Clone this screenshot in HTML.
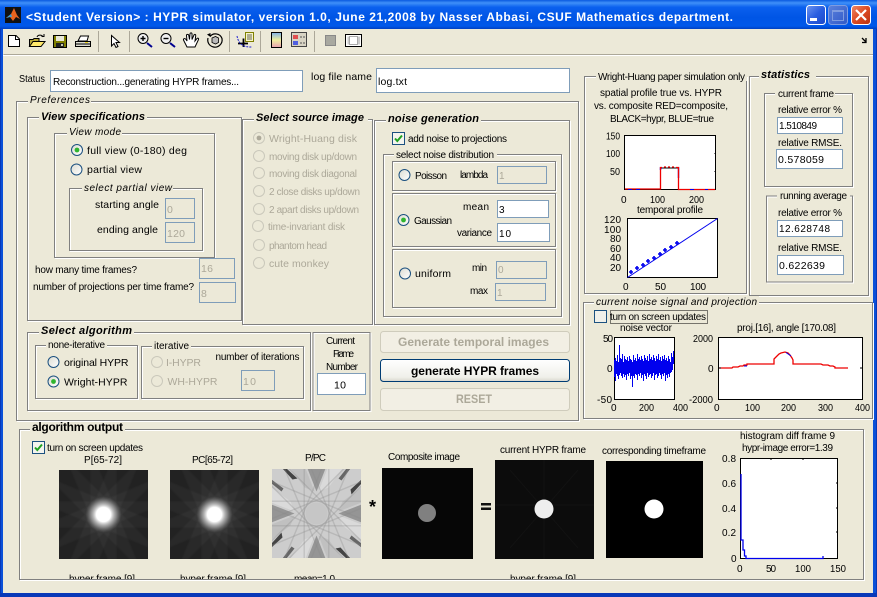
<!DOCTYPE html>
<html><head><meta charset="utf-8"><title>HYPR simulator</title>
<style>
html,body{margin:0;padding:0;background:#ece9d8;width:877px;height:597px;overflow:hidden}
svg{display:block}
text{font-family:"Liberation Sans",sans-serif;font-size:10px;fill:#000;white-space:pre}
.d{fill:#aca899}
.bi{font-weight:bold;font-style:italic;font-size:11px}
.i{font-style:italic;font-size:10px}
.b{font-weight:bold;font-size:12px}
.n{font-size:10.5px}
.g{fill:none;stroke:#808080}
.w{fill:none;stroke:#fff}
.bg{fill:#ece9d8}
.in{fill:#fff;stroke:#7f9db9}
.dis{fill:#ece9d8;stroke:#7f9db9}
.ax{fill:#fff;stroke:#000}
.sep{stroke:#aca899}
</style></head><body>
<svg xmlns="http://www.w3.org/2000/svg" width="877" height="597" viewBox="0 0 877 597">
<defs>
<linearGradient id="tb" x1="0" y1="0" x2="0" y2="1">
<stop offset="0" stop-color="#0a5ae0"/><stop offset=".1" stop-color="#3f90f8"/><stop offset=".25" stop-color="#0a60ee"/><stop offset=".6" stop-color="#0055e5"/><stop offset=".9" stop-color="#0058ea"/><stop offset="1" stop-color="#0040c0"/>
</linearGradient>
<linearGradient id="btnb" x1="0" y1="0" x2="1" y2="1"><stop offset="0" stop-color="#6f97f0"/><stop offset=".5" stop-color="#2a5ee0"/><stop offset="1" stop-color="#1c48c8"/></linearGradient>
<linearGradient id="btnf" x1="0" y1="0" x2="1" y2="1"><stop offset="0" stop-color="#5c82dc"/><stop offset="1" stop-color="#2f58c8"/></linearGradient>
<linearGradient id="btnr" x1="0" y1="0" x2="1" y2="1"><stop offset="0" stop-color="#ee8a6a"/><stop offset=".5" stop-color="#dd4a22"/><stop offset="1" stop-color="#b83010"/></linearGradient>
<linearGradient id="rf" x1="0" y1="0" x2="1" y2="1"><stop offset="0" stop-color="#dcdcd2"/><stop offset="1" stop-color="#fff"/></linearGradient>
<linearGradient id="bf" x1="0" y1="0" x2="0" y2="1"><stop offset="0" stop-color="#fff"/><stop offset=".8" stop-color="#f0f0ea"/><stop offset="1" stop-color="#d8d6cc"/></linearGradient>
<linearGradient id="cb" x1="0" y1="0" x2="0" y2="1"><stop offset="0" stop-color="#7fb0e8"/><stop offset=".5" stop-color="#f0f0a0"/><stop offset="1" stop-color="#e8a0b0"/></linearGradient>
<radialGradient id="glow"><stop offset="0" stop-color="#fff"/><stop offset=".4" stop-color="#fff"/><stop offset=".65" stop-color="#bbb" stop-opacity=".7"/><stop offset="1" stop-color="#888" stop-opacity="0"/></radialGradient>
<filter id="sf" x="-5%" y="-5%" width="110%" height="110%"><feGaussianBlur stdDeviation=".7"/></filter>
<g id="r"><circle r="5.5" fill="url(#rf)" stroke="#1c5180"/></g>
<g id="rc"><circle r="5.5" fill="url(#rf)" stroke="#1c5180"/><circle r="2.4" fill="#2fb52f"/></g>
<g id="rd"><circle r="5.5" fill="#ece9d8" stroke="#cac8bb"/></g>
<g id="rdc"><circle r="5.5" fill="#ece9d8" stroke="#cac8bb"/><circle r="2.4" fill="#aca899"/></g>
<g id="ck"><rect x=".5" y=".5" width="12" height="12" fill="#f4f4ee" stroke="#1c5180"/><path d="M3 6.5 5.3 9 10 3.5" fill="none" stroke="#21a121" stroke-width="2"/></g>
<g id="st" fill="#fff"><rect x="-70" y="-13" width="140" height="26" opacity=".035"/></g>
<g id="strips"><use href="#st"/><use href="#st" transform="rotate(22.5)"/><use href="#st" transform="rotate(45)"/><use href="#st" transform="rotate(67.5)"/><use href="#st" transform="rotate(90)"/><use href="#st" transform="rotate(112.5)"/><use href="#st" transform="rotate(135)"/><use href="#st" transform="rotate(157.5)"/></g>
<g id="pst"><rect x="-70" y="-13" width="140" height="1.4" fill="#888" opacity=".3"/><rect x="-70" y="11.6" width="140" height="1.4" fill="#888" opacity=".3"/></g>
<g id="pstrips"><use href="#pst"/><use href="#pst" transform="rotate(22.5)"/><use href="#pst" transform="rotate(45)"/><use href="#pst" transform="rotate(67.5)"/><use href="#pst" transform="rotate(90)"/><use href="#pst" transform="rotate(112.5)"/><use href="#pst" transform="rotate(135)"/><use href="#pst" transform="rotate(157.5)"/></g>
<g id="pq"><path d="M-9-45H9L0-22Z" fill="#959595"/><path d="M-34-45H-30L-19-35-24-34Z" fill="#444"/><path d="M34-45H30L22-35 25-33Z" fill="#666"/><path d="M-26-45H-11L-2-22-12-26Z" fill="#c0c0c0"/><path d="M26-45H11L2-22 12-26Z" fill="#dadada"/></g>
<clipPath id="cl"><rect x="20" y="430" width="843" height="149"/></clipPath>
</defs>

<!-- window frame -->
<rect width="877" height="597" fill="#0a50d8"/>
<rect x="0" y="0" width="877" height="29" fill="url(#tb)"/>
<rect x="3" y="29" width="870" height="564" fill="#ece9d8"/>
<rect y="593" width="877" height="4" fill="#0838b8"/>
<rect x="0" y="29" width="1" height="564" fill="#0838b8"/>
<rect x="876" y="29" width="1" height="564" fill="#0838b8"/>

<!-- title bar -->
<rect x="5" y="7" width="16" height="16" fill="#111"/>
<path d="M6 18 11 14 14 8 17 15 20 19 16 17 13 21 10 17Z" fill="#e8641e"/>
<path d="M6 18 11 14 12 17 10 17Z" fill="#3aa0d8"/>
<text x="26" y="21" textLength="707" style="font-weight:bold;font-size:12px;fill:#fff">&lt;Student Version&gt; : HYPR simulator, version 1.0, June 21,2008 by Nasser Abbasi, CSUF Mathematics department.</text>
<rect x="806.5" y="5.5" width="19" height="19" rx="3" fill="url(#btnb)" stroke="#fff"/>
<rect x="810" y="18" width="7" height="3" fill="#fff"/>
<rect x="828.5" y="5.5" width="19" height="19" rx="3" fill="url(#btnf)" stroke="#7f9ce0"/>
<rect x="832.5" y="10.5" width="11" height="10" fill="none" stroke="#7f9ce0"/><rect x="832" y="10" width="12" height="2" fill="#7f9ce0"/>
<rect x="851.5" y="5.5" width="19" height="19" rx="3" fill="url(#btnr)" stroke="#fff"/>
<path d="M856 10 866 20M866 10 856 20" stroke="#fff" stroke-width="2.2"/>

<!-- toolbar -->
<path d="M3.5 54.5H873" stroke="#aca899"/><path d="M3 55.5H873" stroke="#fff"/>
<path class="sep" d="M98.5 31V52M129.5 31V52M229.5 31V52M260.5 31V52M314.5 31V52"/>
<path d="M8.5 35.5H16L19.5 39V46.5H8.5Z" fill="#fff" stroke="#000"/><path d="M15.5 36V39.5H19" fill="none" stroke="#000"/>
<path d="M29.5 46.5V39.5H33L34 38.5H39V41" fill="#b8a838" stroke="#000"/><path d="M29.5 46.5 33 41.5H45L41 46.5Z" fill="#ffe96b" stroke="#000"/><path d="M37 37C38 34.5 42 34.5 43 37M41.5 36.5H44V34" fill="none" stroke="#000"/>
<rect x="53.5" y="35.5" width="13" height="12" fill="#808000" stroke="#000"/><rect x="56" y="36" width="8" height="5" fill="#e8e8d8"/><rect x="56" y="43" width="8" height="4" fill="#222"/><rect x="61" y="44" width="2" height="2" fill="#c8c8a8"/>
<path d="M78 41 80.5 36H88.5L87 41Z" fill="#fff" stroke="#000"/><path d="M75.5 41.5H90.5V46.5H75.5Z" fill="#dcdcd0" stroke="#000"/><path d="M76 44H90" stroke="#000"/><rect x="85" y="42" width="3" height="1" fill="#e8d020"/>
<path d="M111.5 35.5V46L114 43.5 116 47.5 118 46.5 116 42.5H119.5Z" fill="#fff" stroke="#000"/>
<circle cx="143" cy="38.5" r="5" fill="#f0f0f0" stroke="#000"/><path d="M140.5 38.5H145.5M143 36V41" stroke="#000" stroke-width="1.4"/><path d="M147 43 152 47" stroke="#000090" stroke-width="2"/>
<circle cx="166" cy="38.5" r="5" fill="#f0f0f0" stroke="#000"/><path d="M163.5 38.5H168.5" stroke="#000" stroke-width="1.4"/><path d="M170 43 175 47" stroke="#000090" stroke-width="2"/>
<path d="M187 47 183.5 40C183 38.5 185 38 186 39.5L187 41 186.5 35.5C186.5 34 188.5 34 188.8 35.5L189.5 39.5 190 33.8C190.2 32.5 192 32.6 192 34L192 39.5 194 35C194.6 33.8 196 34.5 195.7 36L195 41 197 38.5C198 37.6 199 38.5 198.5 39.6L195 47Z" fill="#fff" stroke="#000"/>
<path d="M210 36.5C213 32.5 220 33 222 38.5 223 44 218 48 213.5 47 209 46 207 42 208 38" fill="none" stroke="#000" stroke-width="1.2"/><path d="M207 34.5 210.5 37 210.5 33Z" fill="#000"/><path d="M212 38 215.5 36.5 218.5 38V42.5L215.5 44 212 42.5Z" fill="#bbb" stroke="#000" stroke-width=".8"/>
<rect x="245.5" y="32.5" width="8" height="9" fill="#f8f4c8" stroke="#808000"/><path d="M247 35H252M247 37H252M247 39H252" stroke="#333" stroke-width=".8"/>
<path d="M243.5 38.5V47M238 43.5H248" stroke="#000" stroke-width="1.8" fill="none"/><path d="M237 36C238 41 240 44 244 46 247 47 250 47 252 47" fill="none" stroke="#2020d0" stroke-dasharray="2 1"/>
<rect x="271.5" y="32.5" width="10" height="15" fill="url(#cb)" stroke="#000"/>
<rect x="291.5" y="32.5" width="15" height="14" fill="#d8d4c4" stroke="#444"/><rect x="293" y="35" width="5" height="4" fill="#e05050"/><rect x="293" y="41" width="5" height="4" fill="#5060e0"/><path d="M300 37H305M300 43H305" stroke="#555" stroke-dasharray="2 1"/>
<rect x="325.5" y="35.5" width="10" height="10" fill="#a8a8a0" stroke="#888"/>
<rect x="345.5" y="34.5" width="16" height="12" fill="#fff" stroke="#000"/><rect x="347.5" y="36.5" width="2" height="8" fill="#ccc"/><rect x="349.5" y="36.5" width="8" height="8" fill="#fff" stroke="#aaa"/><rect x="358" y="36.5" width="2" height="8" fill="#ccc"/>
<path d="M862 38 866 42M866 38V42.5H862" fill="none" stroke="#000" stroke-width="1.3"/>

<!-- status row -->
<text x="19" y="82" textLength="26" lengthAdjust="spacingAndGlyphs">Status</text>
<rect class="in" x="50.5" y="70.5" width="252" height="21"/>
<text x="53" y="85" textLength="186">Reconstruction...generating HYPR frames...</text>
<text x="311" y="80" textLength="61" class="n">log file name</text>
<rect class="in" x="376.5" y="68.5" width="193" height="24"/>
<text x="378" y="85" textLength="29" class="n">log.txt</text>

<!-- Preferences -->
<rect class="w" x="17.5" y="102.5" width="562" height="319"/><rect class="g" x="16.5" y="101.5" width="562" height="319"/>
<rect class="bg" x="28" y="96" width="63" height="10"/><text x="30" y="103" textLength="60" class="i">Preferences</text>

<!-- View spec -->
<rect class="w" x="28.5" y="118.5" width="214" height="203"/><rect class="g" x="27.5" y="117.5" width="214" height="203"/>
<rect class="bg" x="39" y="112" width="108" height="10"/><text x="41" y="120" textLength="104" class="bi">View specifications</text>
<rect class="w" x="55.5" y="134.5" width="160" height="124"/><rect class="g" x="54.5" y="133.5" width="160" height="124"/>
<rect class="bg" x="67" y="128" width="55" height="10"/><text x="69" y="135" textLength="52" class="i">View mode</text>
<use href="#rc" x="77" y="150"/><text x="87" y="154" textLength="100" class="n">full view (0-180) deg</text>
<use href="#r" x="76.5" y="169.5"/><text x="87" y="173" textLength="55" class="n">partial view</text>
<rect class="w" x="70.5" y="189.5" width="133" height="62"/><rect class="g" x="69.5" y="188.5" width="133" height="62"/>
<rect class="bg" x="82" y="183" width="91" height="10"/><text x="84" y="191" textLength="88" class="i">select partial view</text>
<text x="95" y="208" textLength="64" class="n">starting angle</text>
<rect class="dis" x="165.5" y="198.5" width="29" height="20"/><text x="167" y="213" class="d n">0</text>
<text x="97" y="233" textLength="61" class="n">ending angle</text>
<rect class="dis" x="165.5" y="222.5" width="29" height="20"/><text x="167" y="237" textLength="18" class="d n">120</text>
<text x="35" y="273" textLength="102">how many time frames?</text>
<rect class="dis" x="199.5" y="258.5" width="35" height="20"/><text x="201" y="272" class="d n" textLength="12">16</text>
<text x="33" y="290" textLength="161">number of projections per time frame?</text>
<rect class="dis" x="199.5" y="282.5" width="36" height="20"/><text x="201" y="297" class="d n">8</text>

<!-- source -->
<rect class="w" x="243.5" y="120.5" width="130" height="205"/><rect class="g" x="242.5" y="119.5" width="130" height="205"/>
<rect class="bg" x="254" y="113" width="114" height="10"/><text x="256" y="121" textLength="108" class="bi">Select source image</text>
<use href="#rdc" x="259" y="138"/><text class="d n" x="269" y="142" textLength="88">Wright-Huang disk</text>
<use href="#rd" x="259" y="156"/><text class="d" x="269" y="160" textLength="88">moving disk up/down</text>
<use href="#rd" x="259" y="173"/><text class="d" x="269" y="177" textLength="88">moving disk diagonal</text>
<use href="#rd" x="259" y="191"/><text class="d" x="269" y="195" textLength="91">2 close disks up/down</text>
<use href="#rd" x="259" y="209"/><text class="d" x="269" y="213" textLength="90">2 apart disks up/down</text>
<use href="#rd" x="258" y="226"/><text class="d" x="268" y="230" textLength="77">time-invariant disk</text>
<use href="#rd" x="259" y="245"/><text class="d" x="269" y="249" textLength="58">phantom head</text>
<use href="#rd" x="259" y="263"/><text class="d n" x="269" y="267" textLength="60">cute monkey</text>

<!-- noise generation -->
<rect class="w" x="375.5" y="121.5" width="195" height="204"/><rect class="g" x="374.5" y="120.5" width="195" height="204"/>
<rect class="bg" x="386" y="114" width="95" height="10"/><text x="388" y="122" textLength="91" class="bi">noise generation</text>
<use href="#ck" x="392" y="132"/><text x="408" y="142" textLength="99">add noise to projections</text>
<rect class="w" x="384.5" y="155.5" width="178" height="162"/><rect class="g" x="383.5" y="154.5" width="178" height="162"/>
<rect class="bg" x="394" y="149" width="103" height="10"/><text x="396" y="158" textLength="98">select noise distribution</text>
<rect class="w" x="393.5" y="162.5" width="163" height="29"/><rect class="g" x="392.5" y="161.5" width="163" height="29"/>
<use href="#r" x="404.5" y="175"/><text x="415" y="179" textLength="32">Poisson</text>
<text x="460" y="178" textLength="28">lambda</text>
<rect class="dis" x="497.5" y="166.5" width="49" height="17"/><text x="499" y="179" class="d">1</text>
<rect class="w" x="393.5" y="194.5" width="163" height="53"/><rect class="g" x="392.5" y="193.5" width="163" height="53"/>
<use href="#rc" x="403.5" y="220"/><text x="414" y="224" textLength="38">Gaussian</text>
<text x="463" y="210" textLength="26">mean</text>
<rect class="in" x="497.5" y="200.5" width="51" height="17"/><text x="499" y="213">3</text>
<text x="457" y="236" textLength="35">variance</text>
<rect class="in" x="497.5" y="223.5" width="52" height="18"/><text x="499" y="237" textLength="12">10</text>
<rect class="w" x="393.5" y="250.5" width="163" height="58"/><rect class="g" x="392.5" y="249.5" width="163" height="58"/>
<use href="#r" x="405" y="273.5"/><text x="415" y="277" textLength="36" class="n">uniform</text>
<text x="472" y="271" textLength="15">min</text>
<rect class="dis" x="496.5" y="261.5" width="50" height="17"/><text x="498" y="273" class="d">0</text>
<text x="470" y="294" textLength="18">max</text>
<rect class="dis" x="495.5" y="283.5" width="50" height="17"/><text x="497" y="296" class="d">1</text>

<!-- algorithm -->
<rect class="w" x="28.5" y="333.5" width="283" height="78"/><rect class="g" x="27.5" y="332.5" width="283" height="78"/>
<rect class="bg" x="39" y="326" width="95" height="10"/><text x="41" y="334" textLength="91" class="bi">Select algorithm</text>
<rect class="w" x="36.5" y="346.5" width="102" height="53"/><rect class="g" x="35.5" y="345.5" width="102" height="53"/>
<rect class="bg" x="46" y="340" width="61" height="10"/><text x="48" y="348" textLength="57">none-iterative</text>
<use href="#r" x="53.5" y="362"/><text x="64" y="366" textLength="64.500" class="n">original HYPR</text>
<use href="#rc" x="53.5" y="381.500"/><text x="64" y="385.500" textLength="63.500" class="n">Wright-HYPR</text>
<rect class="w" x="142.500" y="347.500" width="162" height="52"/><rect class="g" x="141.500" y="346.500" width="162" height="52"/>
<rect class="bg" x="152" y="341" width="39" height="10"/><text x="154" y="349" textLength="35">iterative</text>
<use href="#rd" x="157" y="362"/><text class="d n" x="166" y="366" textLength="35">I-HYPR</text>
<use href="#rd" x="157" y="381"/><text class="d n" x="167.500" y="385" textLength="50" lengthAdjust="spacingAndGlyphs">WH-HYPR</text>
<text x="215.500" y="360" textLength="84">number of iterations</text>
<rect class="dis" x="241.500" y="370.500" width="33" height="20"/><text x="243" y="385" class="d n" textLength="13">10</text>
<rect class="w" x="314" y="333.500" width="57" height="78"/><rect class="g" x="313" y="332.500" width="57" height="78"/>
<text x="326" y="344" textLength="29">Current</text>
<text x="333" y="357" textLength="21">Frame</text>
<text x="326" y="370" textLength="32">Number</text>
<rect class="in" x="317.500" y="373.500" width="48" height="21"/>
<text x="334" y="388.500" textLength="12" class="n">10</text>

<!-- buttons -->
<rect x="380.500" y="331.500" width="189" height="21" rx="3" fill="#f2efe4" stroke="#cfccbc"/>
<text x="398" y="346" textLength="151" class="b d">Generate temporal images</text>
<rect x="380.500" y="359.500" width="189" height="22" rx="3" fill="url(#bf)" stroke="#003c74"/>
<text x="411" y="375" textLength="128" class="b">generate HYPR frames</text>
<rect x="380.500" y="388.500" width="189" height="22" rx="3" fill="#f2efe4" stroke="#cfccbc"/>
<text x="456" y="403" textLength="36" class="b d" lengthAdjust="spacingAndGlyphs">RESET</text>

<!-- Wright-Huang -->
<rect class="w" x="585.500" y="77.500" width="162" height="217"/><rect class="g" x="584.500" y="76.500" width="162" height="217"/>
<rect class="bg" x="596" y="71" width="151" height="10"/><text x="598" y="80" textLength="147">Wright-Huang paper simulation only</text>
<text x="600" y="96" textLength="122">spatial profile true vs. HYPR</text>
<text x="594" y="109" textLength="134">vs. composite RED=composite,</text>
<text x="610" y="122" textLength="104">BLACK=hypr, BLUE=true</text>
<rect class="ax" x="624.500" y="135.500" width="91" height="54"/>
<path d="M660.500 189V168H678.500V189" fill="none" stroke="#000"/>
<path d="M660.500 170V168H662M678 168H678.500V178" fill="none" stroke="#0000ee" stroke-width="1.4"/>
<path d="M625 189H660.500V167.500H662M664 167H666M668 167H670M672 167H674M676 167.500H678.500V189.500H715" fill="none" stroke="#ee0000" stroke-width="1.3"/>
<path d="M628 189.500H632M636 189.500H640M690 189.500H694M705 189.500H708" stroke="#0000ee"/>
<path d="M715 153V154M715 171V172" stroke="#000"/>
<text x="606" y="139.500" textLength="14" lengthAdjust="spacingAndGlyphs">150</text><text x="606" y="157" textLength="14" lengthAdjust="spacingAndGlyphs">100</text><text x="610" y="175" textLength="10" lengthAdjust="spacingAndGlyphs">50</text>
<text x="621" y="203">0</text><text x="650" y="203" textLength="15" lengthAdjust="spacingAndGlyphs">100</text><text x="689" y="203" textLength="15" lengthAdjust="spacingAndGlyphs">200</text>
<text x="637" y="213" textLength="66">temporal profile</text>
<rect class="ax" x="627.500" y="218.500" width="90" height="59"/>
<path d="M627.500 277.500 717.500 218.500" stroke="#0000ee"/>
<g stroke="#0000ee" stroke-width="1.6" fill="#0000ee"><path d="M631 270V274M629 272H633"/><path d="M637 266V270M635 268H639"/><path d="M643 263V267M641 265H645"/><path d="M648 259V263M646 261H650"/><path d="M654 256V260M652 258H656"/><path d="M660 252V256M658 254H662"/><path d="M665 248V252M663 250H667"/><path d="M671 245V249M669 247H673"/><path d="M677 241V245M675 243H679"/></g>
<text x="604" y="223" textLength="17">120</text><text x="604" y="233" textLength="17">100</text><text x="610" y="242" textLength="11">80</text><text x="610" y="252" textLength="11">60</text><text x="610" y="261" textLength="11">40</text><text x="610" y="271" textLength="11">20</text>
<text x="623" y="290">0</text><text x="655" y="290" textLength="11">50</text><text x="690" y="290" textLength="16">100</text>

<!-- statistics -->
<rect class="w" x="750.500" y="77.500" width="119" height="219"/><rect class="g" x="749.500" y="76.500" width="119" height="219"/>
<rect class="bg" x="759" y="70" width="57" height="10"/><text x="761" y="78" textLength="49" class="bi">statistics</text>
<rect class="w" x="765.500" y="94.500" width="88" height="93"/><rect class="g" x="764.500" y="93.500" width="88" height="93"/>
<rect class="bg" x="775" y="88" width="60" height="10"/><text x="778" y="97" textLength="56">current frame</text>
<text x="778" y="113" textLength="64">relative error %</text>
<rect class="in" x="777.500" y="117.500" width="65" height="16"/><text x="779" y="129" textLength="38">1.510849</text>
<text x="778" y="146" textLength="64">relative RMSE.</text>
<rect class="in" x="776.500" y="149.500" width="66" height="19"/><text x="778" y="163" textLength="46" class="n">0.578059</text>
<rect class="w" x="767.500" y="197" width="86" height="86"/><rect class="g" x="766.500" y="196" width="86" height="86"/>
<rect class="bg" x="777" y="190" width="73" height="10"/><text x="780" y="199" textLength="67">running average</text>
<text x="778" y="216" textLength="64">relative error %</text>
<rect class="in" x="777.500" y="220.500" width="65" height="16"/><text x="779" y="232" textLength="51">12.628748</text>
<text x="778" y="251" textLength="64">relative RMSE.</text>
<rect class="in" x="777.500" y="255.500" width="66" height="19"/><text x="779" y="269" textLength="46" class="n">0.622639</text>

<!-- noise signal -->
<rect class="w" x="584.500" y="303.500" width="289" height="116"/><rect class="g" x="583.500" y="302.500" width="289" height="116"/>
<rect class="bg" x="594" y="296" width="165" height="10"/><text x="596" y="305" textLength="161" class="i">current noise signal and projection</text>
<rect x="594.500" y="310.500" width="12" height="12" fill="#f0f0ea" stroke="#1c5180"/>
<text x="610" y="320" textLength="96">turn on screen updates</text>
<rect x="610.500" y="310.500" width="97" height="13" fill="none" stroke="#000" stroke-dasharray="1 1"/>
<text x="620" y="331" textLength="52">noise vector</text>
<text x="737" y="331" textLength="99">proj.[16], angle [170.08]</text>
<rect class="ax" x="614.500" y="337.500" width="60" height="62"/>
<path fill="none" stroke="#0000ee" d="M614.500 360V377M615.500 358V381M616.500 361V374M617.500 355V376M618.500 362V379M619.500 345V375M620.500 358V373M621.500 359V376M622.500 354V378M623.500 362V374M624.500 356V377M625.500 359V375M626.500 360V380M627.500 357V374M628.500 361V376M629.500 356V373M630.500 359V379M631.500 360V376M632.500 362V387M633.500 355V376M634.500 360V378M635.500 358V374M636.500 361V375M637.500 354V380M638.500 359V374M639.500 357V376M640.500 360V373M641.500 356V378M642.500 359V375M643.500 361V381M644.500 355V374M645.500 358V376M646.500 360V379M647.500 356V373M648.500 361V377M649.500 354V375M650.500 359V374M651.500 357V378M652.500 360V376M653.500 355V373M654.500 358V380M655.500 361V375M656.500 356V374M657.500 359V378M658.500 354V376M659.500 360V373M660.500 357V375M661.500 361V379M662.500 356V374M663.500 359V376M664.500 355V373M665.500 360V381M666.500 358V375M667.500 361V378M668.500 356V374M669.500 359V377M670.500 362V373M671.500 353V372M672.500 357V370M673.500 351V364"/>
<text x="603" y="342" textLength="10">50</text><text x="607" y="372">0</text><text x="597" y="403" textLength="15">-50</text>
<text x="611" y="411">0</text><text x="639" y="411" textLength="15" lengthAdjust="spacingAndGlyphs">200</text><text x="673" y="411" textLength="15" lengthAdjust="spacingAndGlyphs">400</text>
<rect class="ax" x="718.500" y="337.500" width="144" height="62"/>
<path d="M719 368H732L733 367H738L740 366H743L744 365H747V364H774V359L776 357 779 354 781 353 785 352 788 353 790 355 792 358 793 360V364H821L823 365H828L830 366H833L835 367V368H848" fill="none" stroke="#ee0000" stroke-width="1.3"/>
<path d="M786 352.500 791 356M744 366H747" stroke="#0000ee" fill="none"/>
<path d="M862 368H860M719 368H721" stroke="#000"/>
<text x="693" y="342" textLength="20" lengthAdjust="spacingAndGlyphs">2000</text><text x="708" y="372">0</text><text x="689" y="403" textLength="24" lengthAdjust="spacingAndGlyphs">-2000</text>
<text x="714" y="411">0</text><text x="745" y="411" textLength="15" lengthAdjust="spacingAndGlyphs">100</text><text x="781" y="411" textLength="15" lengthAdjust="spacingAndGlyphs">200</text><text x="818" y="411" textLength="15" lengthAdjust="spacingAndGlyphs">300</text><text x="855" y="411" textLength="15" lengthAdjust="spacingAndGlyphs">400</text>

<!-- algorithm output -->
<rect class="w" x="20.500" y="430.500" width="844" height="150"/><rect class="g" x="19.500" y="429.500" width="844" height="150"/>
<rect class="bg" x="30" y="422" width="95" height="10"/><text x="32" y="431" textLength="91" class="b">algorithm output</text>
<use href="#ck" x="32" y="441"/><text x="47" y="451" textLength="96">turn on screen updates</text>
<text x="84" y="463" textLength="38">P[65-72]</text>
<text x="192" y="463" textLength="41">PC[65-72]</text>
<text x="305" y="461" textLength="21">P/PC</text>
<text x="388" y="460" textLength="72">Composite image</text>
<text x="500" y="453" textLength="86">current HYPR frame</text>
<text x="602" y="454" textLength="104">corresponding timeframe</text>
<text x="740" y="439" textLength="95">histogram diff frame 9</text>
<text x="742" y="451" textLength="91">hypr-image error=1.39</text>

<svg x="59" y="470" width="89" height="89" viewBox="0 0 89 89"><rect width="89" height="89" fill="#1a1a1a"/><use href="#strips" x="44.500" y="44.500" filter="url(#sf)"/><circle cx="44.500" cy="44.500" r="18" fill="url(#glow)"/></svg>
<svg x="170" y="470" width="89" height="89" viewBox="0 0 89 89"><rect width="89" height="89" fill="#1a1a1a"/><use href="#strips" x="44.500" y="44.500" filter="url(#sf)"/><circle cx="44.500" cy="44.500" r="18" fill="url(#glow)"/></svg>
<svg x="272" y="469" width="89" height="89" viewBox="0 0 89 89"><rect width="89" height="89" fill="#cdcdcd"/>
<g transform="translate(44.500 44.500)"><use href="#pq"/><use href="#pq" transform="rotate(90)"/><use href="#pq" transform="rotate(180)"/><use href="#pq" transform="rotate(270)"/><use href="#pstrips"/><circle r="11" fill="#c6c6c6"/></g></svg>

<text x="369" y="513" style="font-weight:bold;font-size:18px">*</text>
<rect x="382" y="468" width="91" height="91" fill="#060606"/>
<circle cx="427" cy="513" r="9" fill="#808080"/>
<rect x="481" y="503" width="10" height="2.500" fill="#111"/><rect x="481" y="507.500" width="10" height="2.500" fill="#111"/>
<rect x="495" y="460" width="99" height="99" fill="#0c0c0c"/>
<path d="M495 505H594M544 460V559M510 470 578 548M578 470 510 548" stroke="#121212"/>
<circle cx="544" cy="509" r="9.500" fill="#eeeeee"/>
<rect x="606" y="461" width="97" height="97" fill="#000"/>
<circle cx="654" cy="509" r="9.500" fill="#fff"/>

<rect class="ax" x="740.500" y="458.500" width="97" height="100"/>
<path d="M741 474V540H743V550H744.500V556H746V558.500H823V556" fill="none" stroke="#0000ee" stroke-width="1.3"/>
<path d="M838 483H836M838 508H836M838 532H836M771 458V460M803 458V460" stroke="#000"/>
<text x="722" y="462" textLength="14">0.8</text><text x="722" y="487" textLength="14">0.6</text><text x="722" y="512" textLength="14">0.4</text><text x="722" y="536" textLength="14">0.2</text><text x="731" y="562">0</text>
<text x="737" y="572">0</text><text x="766" y="572" textLength="10">50</text><text x="795" y="572" textLength="16" lengthAdjust="spacingAndGlyphs">100</text><text x="830" y="572" textLength="16" lengthAdjust="spacingAndGlyphs">150</text>

<g clip-path="url(#cl)">
<text x="69" y="582" textLength="66">hyper frame [9]</text>
<text x="180" y="582" textLength="66">hyper frame [9]</text>
<text x="294" y="582" textLength="41">mean=1.0</text>
<text x="510" y="582" textLength="66">hyper frame [9]</text>
</g>
</svg>
</body></html>
